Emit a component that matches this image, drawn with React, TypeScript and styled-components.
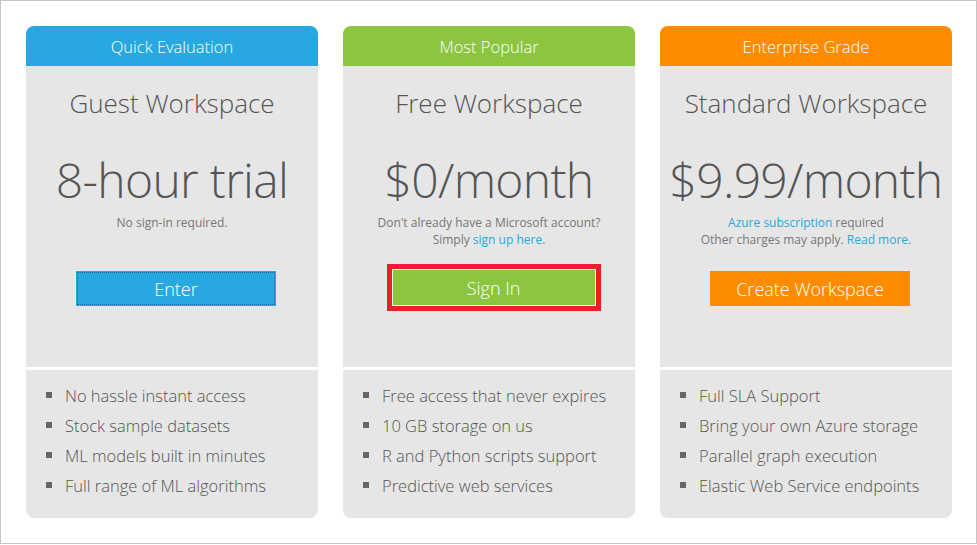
import * as React from "react";
import styled, { createGlobalStyle } from "styled-components";

const GlobalStyle = createGlobalStyle`
  html, body {
    margin: 0;
    padding: 0;
    background: #ffffff;
  }
  body {
    font-family: "Open Sans", "Liberation Sans", sans-serif;
  }
`;

const color = {
  blue: "#27a8e0",
  green: "#8cc63e",
  orange: "#ff8c00",
  panel: "#e6e6e6",
  text: "#555555",
  muted: "#777777",
  link: "#27a8e0",
};

type Tone = "blue" | "green" | "orange";

const Frame = styled.div`
  box-sizing: border-box;
  width: 977px;
  height: 544px;
  border: 1px solid #c6c6c6;
  padding: 25px 0 0 25px;
`;

const Row = styled.div`
  display: flex;
  gap: 25px;
`;

const Card = styled.div`
  width: 292px;
  display: flex;
  flex-direction: column;
`;

const Header = styled.div<{ $tone: Tone }>`
  height: 40px;
  background: ${(p) => color[p.$tone]};
  border-radius: 8px 8px 0 0;
  color: #ffffff;
  font-size: 16.5px;
  font-weight: 300;
  display: flex;
  align-items: center;
  justify-content: center;
`;

const Top = styled.div`
  height: 301px;
  background: ${color.panel};
  display: flex;
  flex-direction: column;
  align-items: center;
  color: ${color.text};
`;

const Name = styled.div`
  margin-top: 20px;
  font-size: 26px;
  font-weight: 300;
  line-height: 34px;
`;

const Price = styled.div`
  margin-top: 30px;
  font-size: 48px;
  font-weight: 300;
  line-height: 60px;
  letter-spacing: -0.7px;
`;

const Note = styled.div`
  margin-top: 4px;
  height: 42px;
  font-size: 12px;
  line-height: 17px;
  color: ${color.muted};
  text-align: center;
`;

const Link = styled.a`
  color: ${color.link};
  text-decoration: none;
`;

const Button = styled.div<{ $tone: Tone; $focus?: boolean }>`
  margin-top: 15px;
  margin-left: 8px;
  box-sizing: border-box;
  width: 200px;
  height: 35px;
  background: ${(p) => color[p.$tone]};
  color: #ffffff;
  font-size: 18px;
  font-weight: 300;
  display: flex;
  align-items: center;
  justify-content: center;
  outline: ${(p) => (p.$focus ? "1px dotted #1b6a93" : "none")};
  outline-offset: -2px;
`;

const Highlight = styled.div`
  margin-top: 8px;
  margin-left: 9px;
  border: 5px solid #e8202a;
  padding: 1px;
  background: #f2f2f2;
  & > ${Button} {
    margin: 0;
    width: 202px;
  }
`;

const Bottom = styled.div`
  margin-top: 3px;
  height: 148px;
  background: ${color.panel};
  border-radius: 0 0 8px 8px;
  box-sizing: border-box;
  padding: 10px 0 0 20px;
`;

const List = styled.ul`
  margin: 0;
  padding: 0;
  list-style: none;
`;

const Item = styled.li`
  display: flex;
  align-items: center;
  height: 30px;
  font-size: 16.5px;
  font-weight: 300;
  color: ${color.text};
  &::before {
    content: "";
    width: 6px;
    height: 6px;
    background: #666666;
    margin-right: 13px;
  }
`;

const plans = [
  {
    tone: "blue" as Tone,
    label: "Quick Evaluation",
    name: "Guest Workspace",
    price: "8-hour trial",
    note: <>No sign-in required.</>,
    action: "Enter",
    features: [
      "No hassle instant access",
      "Stock sample datasets",
      "ML models built in minutes",
      "Full range of ML algorithms",
    ],
  },
  {
    tone: "green" as Tone,
    label: "Most Popular",
    name: "Free Workspace",
    price: "$0/month",
    note: (
      <>
        Don't already have a Microsoft account?
        <br />
        Simply <Link>sign up here</Link>.
      </>
    ),
    action: "Sign In",
    features: [
      "Free access that never expires",
      "10 GB storage on us",
      "R and Python scripts support",
      "Predictive web services",
    ],
  },
  {
    tone: "orange" as Tone,
    label: "Enterprise Grade",
    name: "Standard Workspace",
    price: "$9.99/month",
    note: (
      <>
        <Link>Azure subscription</Link> required
        <br />
        Other charges may apply. <Link>Read more</Link>.
      </>
    ),
    action: "Create Workspace",
    features: [
      "Full SLA Support",
      "Bring your own Azure storage",
      "Parallel graph execution",
      "Elastic Web Service endpoints",
    ],
  },
];

export default function App() {
  return (
    <>
      <GlobalStyle />
      <Frame>
        <Row>
          {plans.map((plan) => (
            <Card key={plan.label}>
              <Header $tone={plan.tone}>{plan.label}</Header>
              <Top>
                <Name>{plan.name}</Name>
                <Price>{plan.price}</Price>
                <Note>{plan.note}</Note>
                {plan.tone === "green" ? (
                  <Highlight>
                    <Button $tone={plan.tone}>{plan.action}</Button>
                  </Highlight>
                ) : (
                  <Button $tone={plan.tone} $focus={plan.tone === "blue"}>
                    {plan.action}
                  </Button>
                )}
              </Top>
              <Bottom>
                <List>
                  {plan.features.map((f) => (
                    <Item key={f}>{f}</Item>
                  ))}
                </List>
              </Bottom>
            </Card>
          ))}
        </Row>
      </Frame>
    </>
  );
}
